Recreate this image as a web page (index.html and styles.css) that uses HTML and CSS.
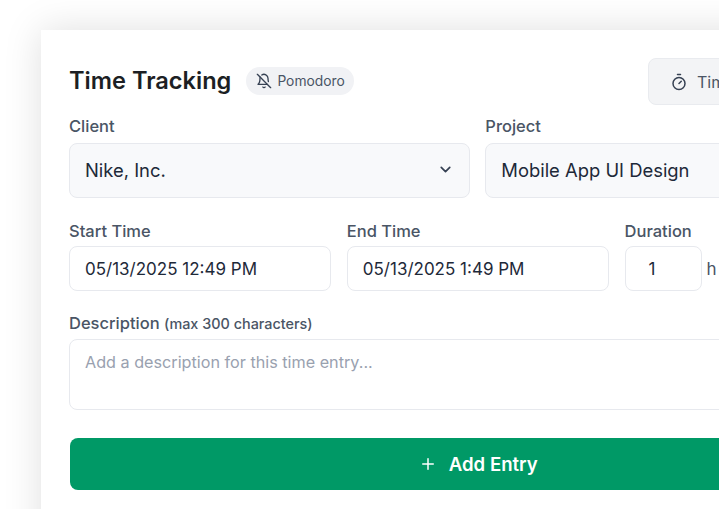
FILE: index.html
```html
<!DOCTYPE html>
<html lang="en">
<head>
<meta charset="utf-8">
<title>Time Tracking</title>
<link rel="stylesheet" href="styles.css">
</head>
<body>
<main class="card">
  <header class="head">
    <h1 class="title">Time Tracking</h1>
    <span class="pill">
      <svg class="pill-icon" viewBox="0 0 24 24" fill="none" stroke="currentColor" stroke-width="2" stroke-linecap="round" stroke-linejoin="round"><path d="M8.7 3A6 6 0 0 1 18 8a21.3 21.3 0 0 0 .6 5"/><path d="M17 17H3s3-2 3-9a4.67 4.67 0 0 1 .3-1.7"/><path d="M10.3 21a1.94 1.94 0 0 0 3.4 0"/><path d="m2 2 20 20"/></svg>
      Pomodoro
    </span>
    <button class="timer" type="button">
      <svg class="timer-icon" viewBox="0 0 24 24" fill="none" stroke="currentColor" stroke-width="2" stroke-linecap="round" stroke-linejoin="round"><line x1="10" x2="14" y1="2" y2="2"/><line x1="12" x2="15" y1="14" y2="11"/><circle cx="12" cy="14" r="8"/></svg>
      Timer
    </button>
  </header>

  <div class="row-two">
    <div class="field">
      <label class="label">Client</label>
      <div class="select">
        <span>Nike, Inc.</span>
        <svg class="chev" viewBox="0 0 24 24" fill="none" stroke="currentColor" stroke-width="2.4" stroke-linecap="round" stroke-linejoin="round"><path d="m6 9 6 6 6-6"/></svg>
      </div>
    </div>
    <div class="field">
      <label class="label">Project</label>
      <div class="select">
        <span>Mobile App UI Design</span>
        <svg class="chev" viewBox="0 0 24 24" fill="none" stroke="currentColor" stroke-width="2.4" stroke-linecap="round" stroke-linejoin="round"><path d="m6 9 6 6 6-6"/></svg>
      </div>
    </div>
  </div>

  <div class="row-time">
    <div class="field">
      <label class="label label-tight">Start Time</label>
      <div class="input">05/13/2025 12:49 PM</div>
    </div>
    <div class="field">
      <label class="label label-tight">End Time</label>
      <div class="input">05/13/2025 1:49 PM</div>
    </div>
    <div class="field">
      <label class="label label-tight">Duration</label>
      <div class="dur">
        <div class="input input-dur">1</div>
        <span class="unit">h</span>
      </div>
    </div>
  </div>

  <div class="field desc">
    <label class="label label-desc">Description <small class="hint">(max 300 characters)</small></label>
    <div class="textarea">Add a description for this time entry...</div>
  </div>

  <button class="add" type="button">
    <svg class="plus" viewBox="0 0 24 24" fill="none" stroke="currentColor" stroke-width="2" stroke-linecap="round"><path d="M5 12h14"/><path d="M12 5v14"/></svg>
    Add Entry
  </button>
</main>
</body>
</html>
```

FILE: styles.css
```css
* { box-sizing: border-box; }
html, body { margin: 0; height: 100%; overflow: hidden; background: #fff; }
body {
  font-family: Inter, "Noto Sans", sans-serif;
  color: #1f2328;
  padding: 30px 0 0 41px;
}
.card {
  width: 874px;
  height: 600px;
  background: #fff;
  padding: 28px;
  box-shadow: 0 0 36px rgba(0, 0, 0, 0.13);
}
.head {
  display: flex;
  align-items: center;
  height: 47px;
}
.title {
  margin: 0 0 1px;
  font-size: 23.6px;
  font-weight: 600;
  line-height: 30px;
  color: #1c1f24;
}
.pill {
  display: inline-flex;
  align-items: center;
  gap: 5px;
  height: 28px;
  margin: 0 0 1px 15px;
  padding: 0 9px 0 10px;
  border-radius: 14px;
  background: #f1f2f5;
  font-size: 13.8px;
  font-weight: 400;
  color: #4a5565;
}
.pill-icon { width: 16px; height: 16px; color: #364153; }
.timer {
  display: inline-flex;
  align-items: center;
  gap: 9px;
  height: 47px;
  margin-left: auto;
  width: 239px;
  padding: 0 21px;
  border: 1px solid #e9ebef;
  border-radius: 8px;
  background: #f3f4f6;
  font: 16px Inter, sans-serif;
  color: #4a5565;
}
.timer-icon { width: 18px; height: 18px; color: #364153; flex: none; }
.row-two {
  display: grid;
  grid-template-columns: 400.8px 401px;
  gap: 15.5px;
  margin-top: 12px;
}
.row-time {
  display: grid;
  grid-template-columns: 261.8px 261.8px 1fr;
  gap: 16px;
  margin-top: 24px;
}
.field { display: flex; flex-direction: column; min-width: 0; }
.label {
  font-size: 16.5px;
  font-weight: 450;
  line-height: 18px;
  color: #4a5565;
  margin-bottom: 8px;
}
.label-tight { margin-bottom: 6px; }
.label-desc { margin-bottom: 6px; }
.hint { font-size: 14.4px; font-weight: 450; }
.select {
  display: flex;
  align-items: center;
  justify-content: space-between;
  height: 55px;
  padding: 0 15px 2px;
  border: 1px solid #e7e9ee;
  border-radius: 8px;
  background: #f8f9fb;
  font-size: 18.4px;
  color: #1e2939;
}
.chev { width: 17px; height: 17px; color: #364153; }
.input {
  display: flex;
  align-items: center;
  height: 45px;
  padding: 0 15px;
  border: 1px solid #e7e9ee;
  border-radius: 8px;
  background: #fff;
  font-size: 17px;
  color: #1e2939;
}
.dur { display: flex; align-items: center; gap: 5px; }
.input-dur { width: 77px; padding-left: 23px; }
.unit { font-size: 17px; color: #4a5565; }
.desc { margin-top: 23px; }
.textarea {
  height: 71px;
  padding: 12px 15px;
  border: 1px solid #e7e9ee;
  border-radius: 8px;
  background: #fff;
  font-size: 16.2px;
  line-height: 20px;
  color: #99a1af;
}
.add {
  display: flex;
  align-items: center;
  justify-content: center;
  gap: 12px;
  width: calc(100% - 0.5px);
  height: 52px;
  margin: 28px 0 0 0.5px;
  padding: 0 0 1px;
  border: 0;
  border-radius: 8px;
  background: #009966;
  color: #fff;
  font: 600 18.6px Inter, sans-serif;
}
.plus { width: 18px; height: 18px; }
```
